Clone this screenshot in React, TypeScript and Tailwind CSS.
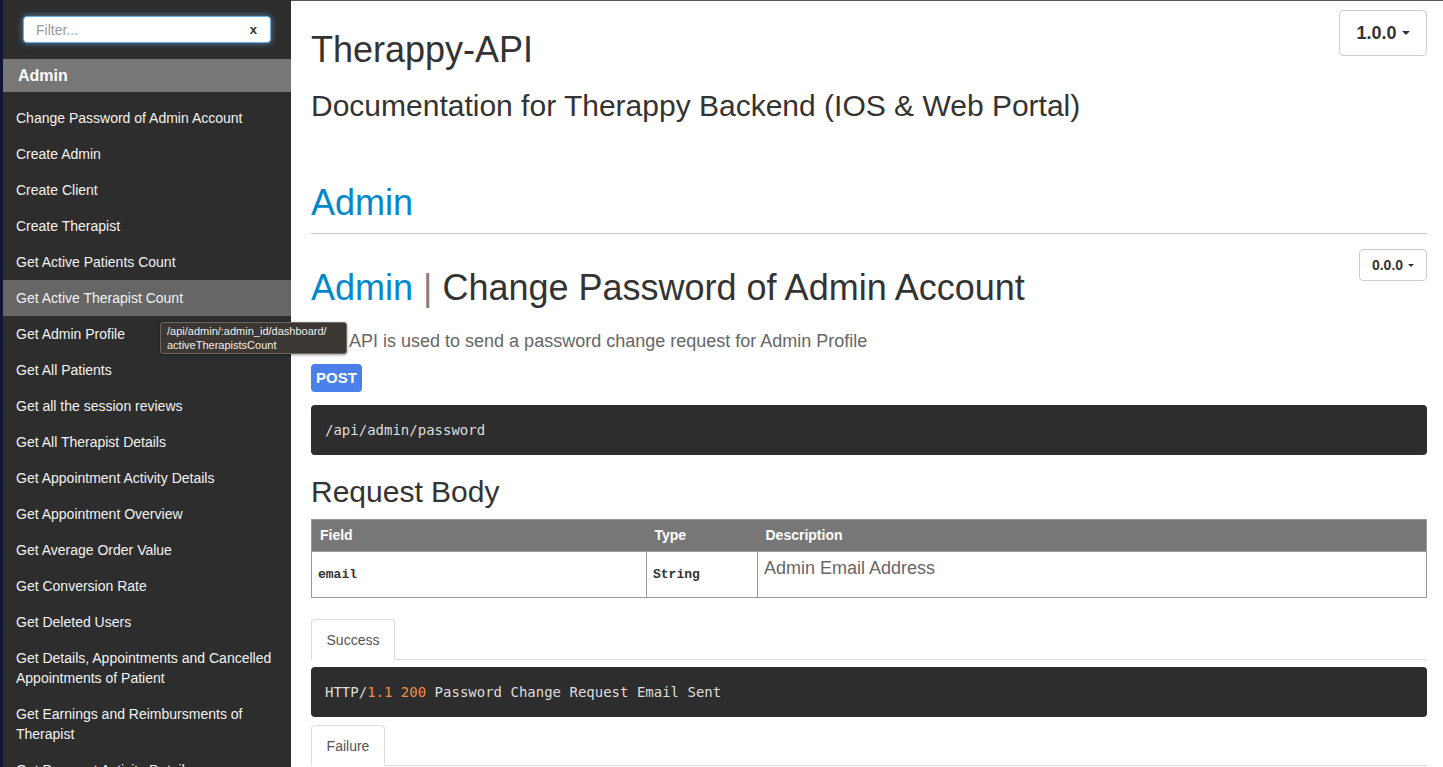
const navItems = [
  'Change Password of Admin Account',
  'Create Admin',
  'Create Client',
  'Create Therapist',
  'Get Active Patients Count',
  'Get Active Therapist Count',
  'Get Admin Profile',
  'Get All Patients',
  'Get all the session reviews',
  'Get All Therapist Details',
  'Get Appointment Activity Details',
  'Get Appointment Overview',
  'Get Average Order Value',
  'Get Conversion Rate',
  'Get Deleted Users',
  'Get Details, Appointments and Cancelled Appointments of Patient',
  'Get Earnings and Reimbursments of Therapist',
  'Get Payment Activity Details',
];

function Caret({ size = 4 }: { size?: number }) {
  return (
    <span
      className="ml-[5px] inline-block h-0 w-0 border-x-transparent border-t-[#333]"
      style={{ borderLeftWidth: size, borderRightWidth: size, borderTopWidth: size }}
    />
  );
}

function Tab({ label, width }: { label: string; width: string }) {
  return (
    <div className="flex border-b border-[#ddd]">
      <div
        className={`-mb-px flex h-[41px] ${width} items-center justify-center rounded-t-[4px] border border-b-0 border-[#ddd] bg-white text-[14px] text-[#555]`}
      >
        {label}
      </div>
    </div>
  );
}

function CodeBlock({ children, className = '' }: { children: React.ReactNode; className?: string }) {
  return (
    <div className={`flex h-[50px] items-center rounded-[4px] bg-[#2d2d2d] pl-[14px] ${className}`}>
      <pre className="font-['DejaVu_Sans_Mono',monospace] text-[14px] text-[#ddd]">{children}</pre>
    </div>
  );
}

export default function App() {
  return (
    <div className="relative flex h-screen w-full overflow-hidden bg-white font-['Liberation_Sans',Arial,sans-serif] text-[#333]">
      {/* left edge strip */}
      <div className="w-[3px] shrink-0 bg-[#14133a]" />

      {/* sidebar */}
      <aside className="flex w-[288px] shrink-0 flex-col bg-[#2d2d2d]">
        <div className="shrink-0 pl-[20px] pt-[16px]">
          <div className="relative h-[27px] w-[248px] rounded-[4px] border border-[#66afe9] bg-white shadow-[0_0_6px_rgba(102,175,233,0.7)]">
            <input
              placeholder="Filter..."
              className="h-full w-full rounded-[4px] bg-transparent pl-[12px] text-[14px] text-[#333] outline-none placeholder:text-[#999]"
            />
            <span className="absolute right-[13px] top-[3px] text-[13px] font-bold text-[#333]">x</span>
          </div>
        </div>
        <div className="mt-[16px] flex h-[33px] shrink-0 items-center bg-[#777] pl-[15px] text-[16px] font-bold text-white">
          Admin
        </div>
        <ul className="shrink-0 pt-[8px]">
          {navItems.map((item, i) => (
            <li
              key={i}
              className={`py-[8px] pl-[13px] pr-[12px] text-[14px] leading-[20px] text-[#f2f2f2] ${
                i === 5 ? 'bg-[#666]' : ''
              }`}
            >
              {item}
            </li>
          ))}
        </ul>
      </aside>

      {/* main */}
      <main className="flex-1 border-t border-[#555] pl-[20px] pr-[16px]">
        <div className="flex items-start justify-between">
          <h1 className="mt-[29px] text-[36px] leading-[40px]">Therappy-API</h1>
          <button className="mt-[9px] flex h-[46px] w-[88px] items-center justify-center rounded-[4px] border border-[#ccc] text-[18px] font-bold text-[#333]">
            1.0.0
            <Caret />
          </button>
        </div>
        <h2 className="mt-[18px] text-[30px] leading-[36px]">Documentation for Therappy Backend (IOS &amp; Web Portal)</h2>

        <h1 className="mt-[59px] text-[36px] leading-[40px] text-[#0088cc]">Admin</h1>
        <div className="mt-[10px] h-px bg-[#ccc]" />

        <section className="relative">
          <button className="absolute right-0 top-[15px] flex h-[32px] w-[68px] items-center justify-center rounded-[4px] border border-[#ccc] text-[14px] font-bold text-[#333]">
            0.0.0
            <Caret size={3} />
          </button>
          <h2 className="pt-[34px] text-[36px] leading-[40px]">
            <span className="text-[#0088cc]">Admin</span>
            <span className="text-[#808080]"> | </span>
            Change Password of Admin Account
          </h2>
          <p className="mt-[20px] text-[18px] leading-[26px] text-[#666]">
            This API is used to send a password change request for Admin Profile
          </p>
          <span className="mt-[10px] inline-flex h-[28px] items-center rounded-[4px] bg-[#4b7fea] px-[5px] text-[15px] font-bold text-white">
            POST
          </span>
          <CodeBlock className="mt-[13px]">/api/admin/password</CodeBlock>

          <h2 className="mt-[19px] text-[30px] leading-[36px]">Request Body</h2>
          <table className="mt-[9px] w-full border-collapse border border-[#999] text-[14px]">
            <thead>
              <tr className="h-[32px] bg-[#777] text-left text-white">
                <th className="w-[335px] pl-[8px] font-bold">Field</th>
                <th className="w-[111px] pl-[8px] font-bold">Type</th>
                <th className="pl-[8px] font-bold">Description</th>
              </tr>
            </thead>
            <tbody>
              <tr className="h-[46px]">
                <td className="border border-[#999] pl-[6px] align-middle font-['Liberation_Mono',monospace] text-[13px] font-bold">
                  email
                </td>
                <td className="border border-[#999] pl-[6px] align-middle font-['Liberation_Mono',monospace] text-[13px] font-bold">
                  String
                </td>
                <td className="border border-[#999] pl-[6px] pt-[3px] align-top text-[18px] leading-[26px] text-[#666]">
                  Admin Email Address
                </td>
              </tr>
            </tbody>
          </table>

          <div className="mt-[21px]">
            <Tab label="Success" width="w-[84px]" />
          </div>
          <CodeBlock className="mt-[7px]">
            HTTP/<span className="text-[#f08d49]">1.1 200</span> Password Change Request Email Sent
          </CodeBlock>
          <div className="mt-[8px]">
            <Tab label="Failure" width="w-[74px]" />
          </div>
        </section>
      </main>

      {/* tooltip */}
      <div className="absolute left-[160px] top-[322px] w-[187px] rounded-[3px] border border-[#6e6762] bg-[#3d3734] px-[6px] py-[1px] text-[11px] leading-[14px] text-[#eee] shadow-[0_1px_3px_rgba(0,0,0,0.4)]">
        /api/admin/:admin_id/dashboard/
        <br />
        activeTherapistsCount
      </div>
    </div>
  );
}
